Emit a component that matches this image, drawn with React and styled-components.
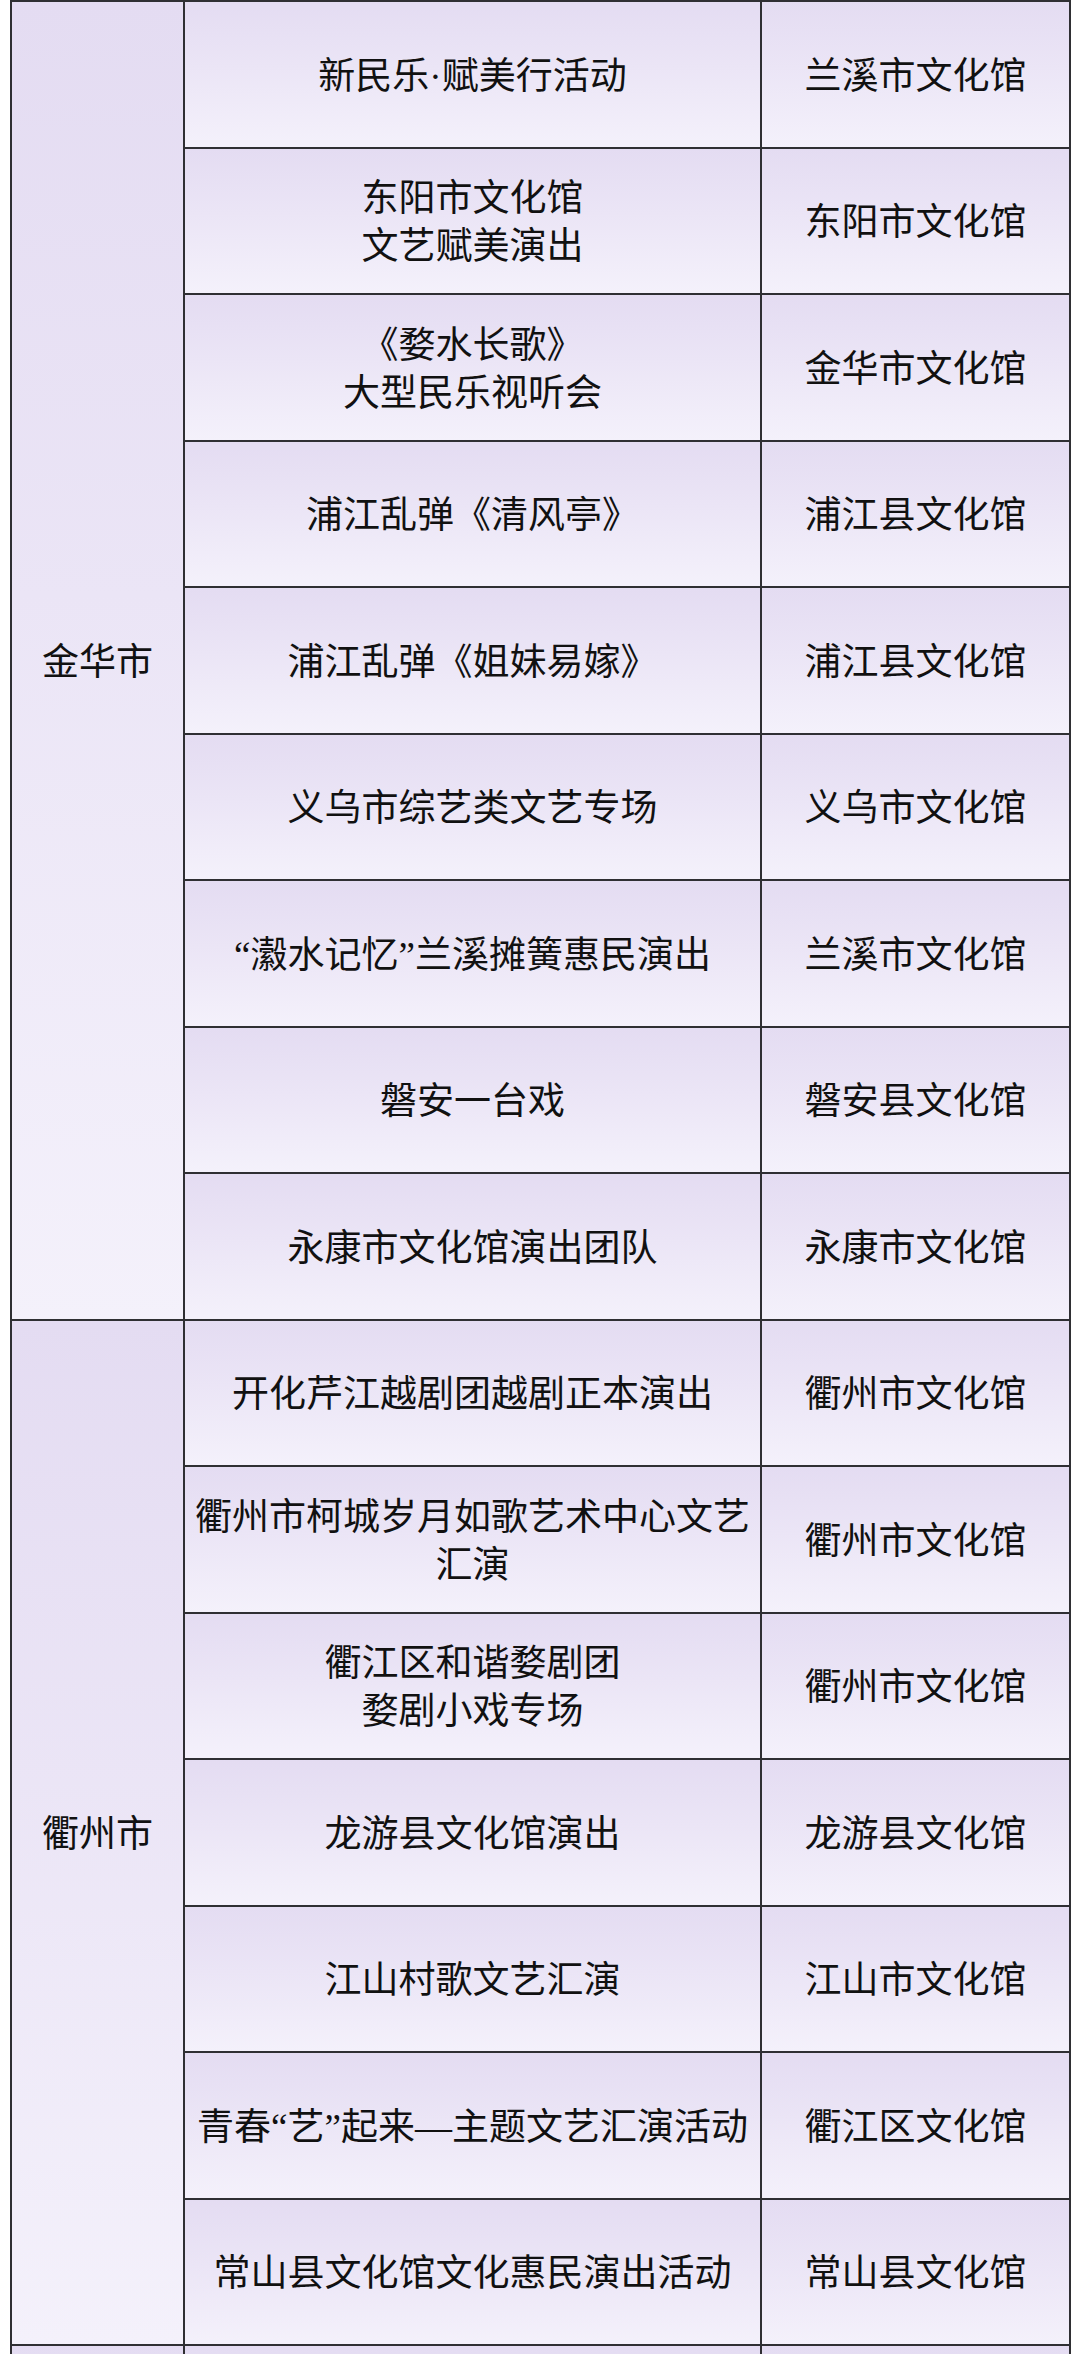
import React from "react";
import styled, { createGlobalStyle } from "styled-components";

const GlobalStyle = createGlobalStyle`
  html, body {
    margin: 0;
    padding: 0;
    background: #ffffff;
  }
  body {
    font-family: "Liberation Serif", "Noto Sans CJK SC", serif;
    color: #111;
  }
`;

const groups = [
  {
    city: "金华市",
    rows: [
      { name: ["新民乐·赋美行活动"], org: "兰溪市文化馆" },
      { name: ["东阳市文化馆", "文艺赋美演出"], org: "东阳市文化馆" },
      { name: ["《婺水长歌》", "大型民乐视听会"], org: "金华市文化馆" },
      { name: ["浦江乱弹《清风亭》"], org: "浦江县文化馆" },
      { name: ["浦江乱弹《姐妹易嫁》"], org: "浦江县文化馆" },
      { name: ["义乌市综艺类文艺专场"], org: "义乌市文化馆" },
      { name: ["“瀫水记忆”兰溪摊簧惠民演出"], org: "兰溪市文化馆" },
      { name: ["磐安一台戏"], org: "磐安县文化馆" },
      { name: ["永康市文化馆演出团队"], org: "永康市文化馆" }
    ]
  },
  {
    city: "衢州市",
    rows: [
      { name: ["开化芹江越剧团越剧正本演出"], org: "衢州市文化馆" },
      { name: ["衢州市柯城岁月如歌艺术中心文艺", "汇演"], org: "衢州市文化馆" },
      { name: ["衢江区和谐婺剧团", "婺剧小戏专场"], org: "衢州市文化馆" },
      { name: ["龙游县文化馆演出"], org: "龙游县文化馆" },
      { name: ["江山村歌文艺汇演"], org: "江山市文化馆" },
      { name: ["青春“艺”起来—主题文艺汇演活动"], org: "衢江区文化馆" },
      { name: ["常山县文化馆文化惠民演出活动"], org: "常山县文化馆" }
    ]
  },
  {
    city: "",
    rows: [{ name: [""], org: "" }]
  }
];

function App() {
  return (
    <Page>
      <GlobalStyle />
      <Table>
        <colgroup>
          <col style={{ width: "173px" }} />
          <col style={{ width: "577px" }} />
          <col style={{ width: "309px" }} />
        </colgroup>
        <tbody>
          {groups.map((group, g) =>
            group.rows.map((row, i) => (
              <Row key={`${g}-${i}`}>
                {i === 0 && <CityCell rowSpan={group.rows.length}>{group.city}</CityCell>}
                <Cell>
                  {row.name.map((line, k) => (
                    <Line key={k}>{line}</Line>
                  ))}
                </Cell>
                <Cell>{row.org}</Cell>
              </Row>
            ))
          )}
        </tbody>
      </Table>
    </Page>
  );
}

const Page = styled.div`
  height: 2354px;
  overflow: hidden;
  padding-left: 10px;
`;

const Table = styled.table`
  border-collapse: collapse;
  table-layout: fixed;
  width: 1061px;
  border: 2px solid #2f2f33;
`;

const Row = styled.tr`
  height: 146.5px;
`;

const Cell = styled.td`
  border: 2px solid #2f2f33;
  background: linear-gradient(180deg, #e4dcf2 0%, #ebe5f6 45%, #f4f1fb 100%);
  text-align: center;
  vertical-align: middle;
  padding: 5px 4px 0;
  font-size: 37px;
  line-height: 48px;
  color: #111;
  white-space: nowrap;
`;

const CityCell = styled(Cell)`
  padding: 5px 0 0;
`;

const Line = styled.div`
  display: block;
`;

export default App;
